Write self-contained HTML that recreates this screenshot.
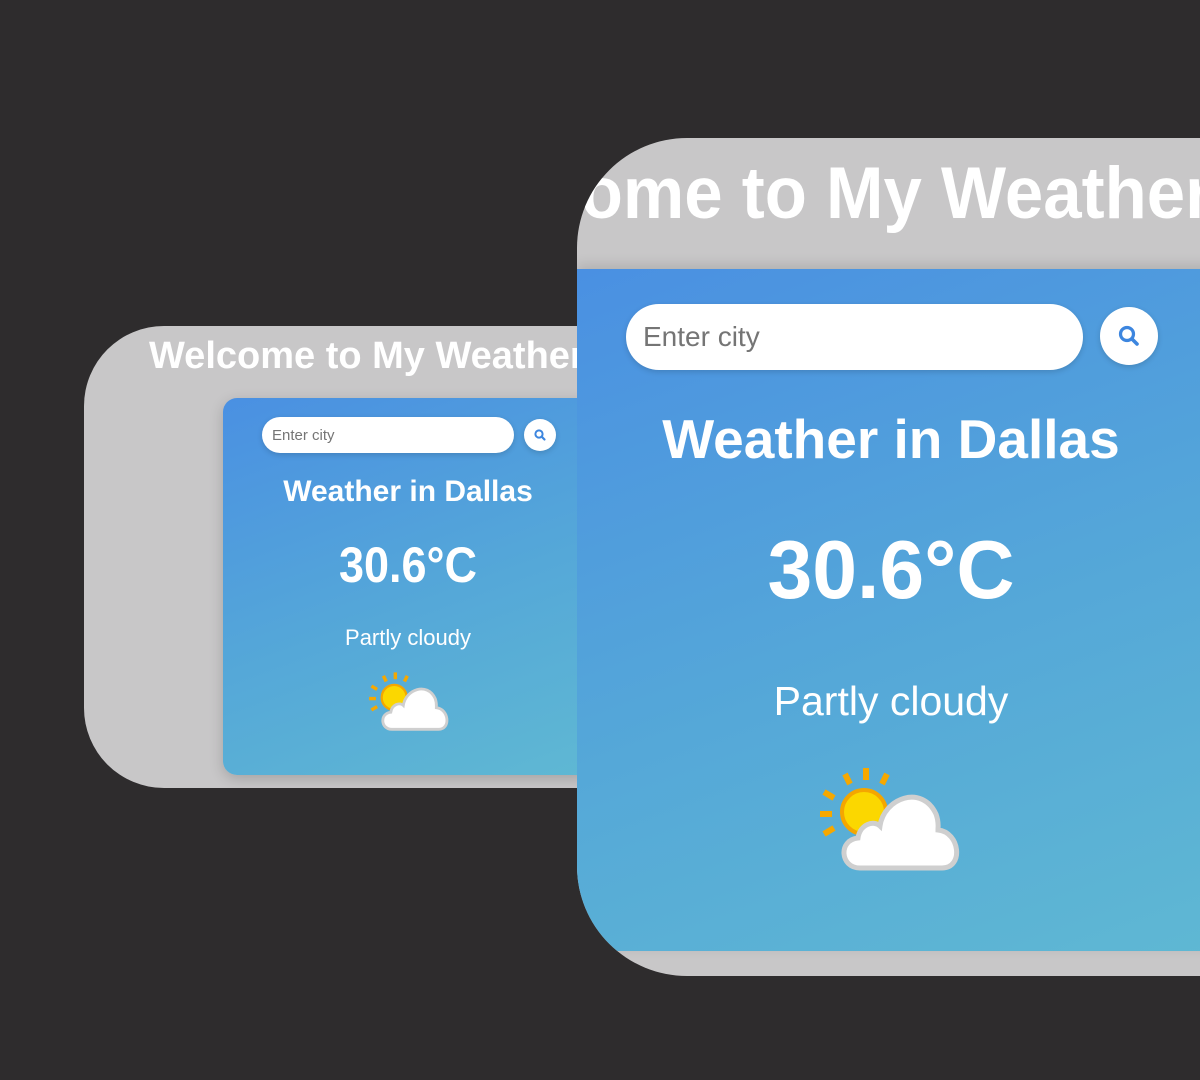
<!DOCTYPE html>
<html><head><meta charset="utf-8"><style>
*{margin:0;padding:0;box-sizing:border-box}
body{width:1200px;height:1080px;background:#2e2c2d;position:relative;overflow:hidden;font-family:"Liberation Sans",Arial,sans-serif}
.panel{position:absolute;background:#c8c7c8;overflow:hidden}
.title{position:absolute;white-space:nowrap;color:#fff;font-weight:bold;transform-origin:0 0}
.card{position:absolute;background:linear-gradient(160deg,#4a90e2 0%,#55a8d8 55%,#5fb8d3 100%);overflow:hidden;box-shadow:0 4px 14px rgba(0,0,0,.18)}
.c{position:absolute;left:0;width:100%;text-align:center;color:#fff;white-space:nowrap}
.inp{position:absolute;background:#fff;border-radius:999px;color:#757575;box-shadow:0 2px 6px rgba(0,0,0,.15)}
.btn{position:absolute;background:#fff;border-radius:50%;box-shadow:0 2px 6px rgba(0,0,0,.15)}
</style></head><body>

<!-- small -->
<div class="panel" style="left:84px;top:326px;width:520px;height:462px;border-radius:80px 0 0 80px">
  <div class="title" style="left:65px;top:9px;font-size:38px">Welcome to My Weather App</div>
  <div class="card" style="left:139px;top:72px;width:370px;height:377px;border-radius:14px">
    <div class="inp" style="left:39px;top:19px;width:252px;height:36px;font-size:15px;padding:10px 0 0 10px">Enter city</div>
    <div class="btn" style="left:301px;top:21px;width:32px;height:32px">
      <svg width="32" height="32" viewBox="0 0 32 32"><circle cx="15" cy="15" r="3.6" fill="none" stroke="#3d86df" stroke-width="2"/><line x1="17.7" y1="17.7" x2="20.5" y2="20.5" stroke="#3d86df" stroke-width="2.2" stroke-linecap="round"/></svg>
    </div>
    <div class="c" style="top:77px;font-size:30px;font-weight:bold;left:-39px;width:448px">Weather in Dallas</div>
    <div class="c" style="top:138px;font-size:50px;font-weight:bold;left:-39px;width:448px;transform:scaleX(.9)">30.6°C</div>
    <div class="c" style="top:227px;font-size:22px;left:-39px;width:448px">Partly cloudy</div>
    <svg style="position:absolute;left:145px;top:274px" width="82" height="60" viewBox="0 0 144 104">
      <g stroke="#f6a800" stroke-width="6">
        <line x1="48" y1="0" x2="48" y2="12"/><line x1="27" y1="6" x2="32" y2="16"/><line x1="69" y1="6" x2="64" y2="16"/>
        <line x1="6" y1="24" x2="16" y2="30"/><line x1="2" y1="46" x2="14" y2="46"/><line x1="6" y1="66" x2="16" y2="60"/>
      </g>
      <circle cx="46" cy="44" r="22" fill="#fbd700" stroke="#f4a600" stroke-width="4"/>
      <path d="M42 100 C22 100 20 72 40 70 C42 56 56 52 62 58 C66 30 104 16 118 46 C121 54 120 58 120 62 C142 64 146 100 124 100 Z" fill="#fff" stroke="#cfcfcf" stroke-width="5"/>
    </svg>
  </div>
</div>

<!-- big -->
<div class="panel" style="left:577px;top:138px;width:660px;height:838px;border-radius:110px 0 0 110px">
  <div class="title" style="left:-156px;top:14px;font-size:73px;transform:scaleX(.945)">Welcome to My Weather App</div>
  <div class="card" style="left:0;top:131px;width:660px;height:682px;border-radius:0;box-shadow:0 -4px 12px rgba(0,0,0,.12)">
    <div class="inp" style="left:49px;top:35px;width:457px;height:66px;font-size:28px;padding:17px 0 0 17px">Enter city</div>
    <div class="btn" style="left:523px;top:38px;width:58px;height:58px">
      <svg width="58" height="58" viewBox="0 0 58 58"><circle cx="27" cy="27" r="6.5" fill="none" stroke="#3d86df" stroke-width="3.2"/><line x1="32" y1="32" x2="37" y2="37" stroke="#3d86df" stroke-width="3.6" stroke-linecap="round"/></svg>
    </div>
    <div class="c" style="top:138px;font-size:55px;font-weight:bold;width:628px">Weather in Dallas</div>
    <div class="c" style="top:253px;font-size:83px;font-weight:bold;width:628px;transform:scaleX(.97)">30.6°C</div>
    <div class="c" style="top:409px;font-size:41px;width:628px">Partly cloudy</div>
    <svg style="position:absolute;left:241px;top:499px" width="144" height="104" viewBox="0 0 144 104">
      <g stroke="#f6a800" stroke-width="6">
        <line x1="48" y1="0" x2="48" y2="12"/><line x1="27" y1="6" x2="32" y2="16"/><line x1="69" y1="6" x2="64" y2="16"/>
        <line x1="6" y1="24" x2="16" y2="30"/><line x1="2" y1="46" x2="14" y2="46"/><line x1="6" y1="66" x2="16" y2="60"/>
      </g>
      <circle cx="46" cy="44" r="22" fill="#fbd700" stroke="#f4a600" stroke-width="4"/>
      <path d="M42 100 C22 100 20 72 40 70 C42 56 56 52 62 58 C66 30 104 16 118 46 C121 54 120 58 120 62 C142 64 146 100 124 100 Z" fill="#fff" stroke="#cfcfcf" stroke-width="5"/>
    </svg>
  </div>
</div>
</body></html>
